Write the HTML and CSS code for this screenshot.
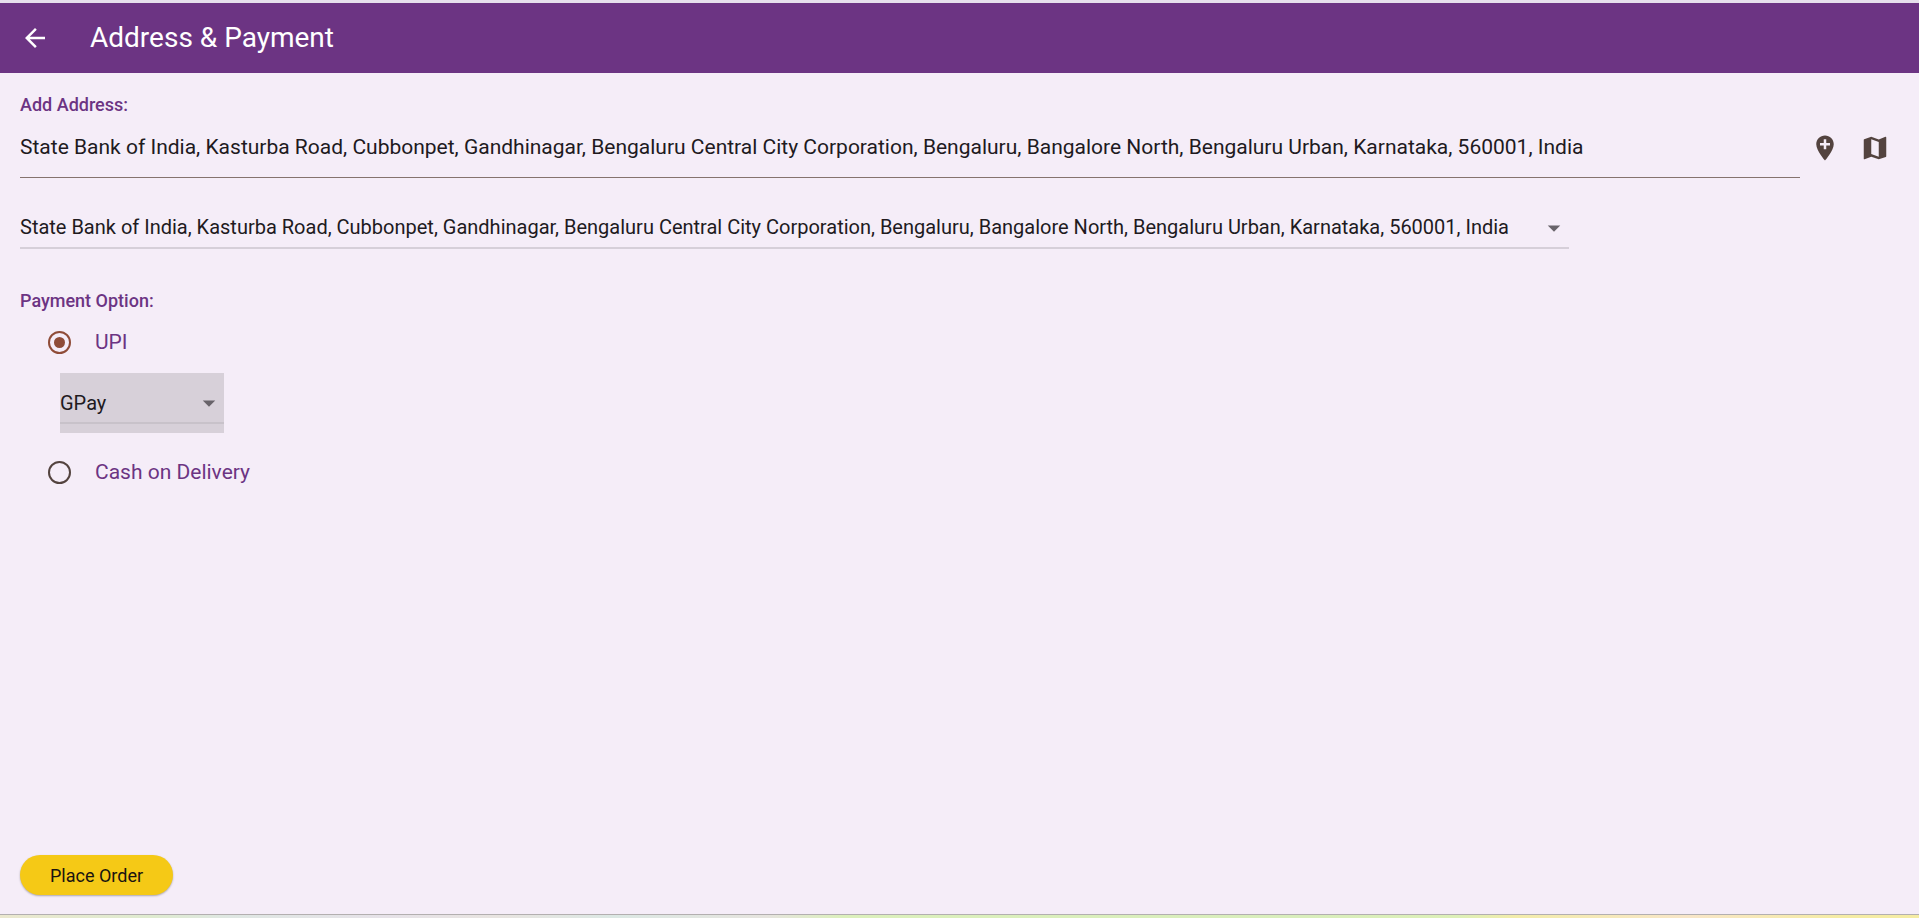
FILE: index.html
```html
<!DOCTYPE html>
<html lang="en">
<head>
<meta charset="utf-8">
<meta name="viewport" content="width=device-width, initial-scale=1">
<title>Address &amp; Payment</title>
<link rel="stylesheet" href="styles.css">
</head>
<body class="page">
<header class="app-bar">
  <button class="icon-button back" type="button" aria-label="Back">
    <svg class="icon" viewBox="0 0 24 24" aria-hidden="true"><path d="M20 11H7.83l5.59-5.59L12 4l-8 8 8 8 1.41-1.41L7.83 13H20v-2z"/></svg>
  </button>
  <h1 class="title">Address &amp; Payment</h1>
</header>
<form class="content">
  <label class="section-label" for="address">Add Address:</label>
  <div class="address-row">
    <input class="address-input" id="address" type="text" value="State Bank of India, Kasturba Road, Cubbonpet, Gandhinagar, Bengaluru Central City Corporation, Bengaluru, Bangalore North, Bengaluru Urban, Karnataka, 560001, India">
    <button class="icon-button" type="button" aria-label="Add location">
      <svg class="icon" viewBox="0 0 24 24" aria-hidden="true"><path d="M12 2C8.14 2 5 5.14 5 9c0 5.25 7 13 7 13s7-7.75 7-13c0-3.86-3.14-7-7-7zm4 8h-3v3h-2v-3H8V8h3V5h2v3h3v2z"/></svg>
    </button>
    <button class="icon-button" type="button" aria-label="Open map">
      <svg class="icon" viewBox="0 0 24 24" aria-hidden="true"><path d="M20.5 3l-.16.03L15 5.1 9 3 3.36 4.9c-.21.07-.36.25-.36.48V20.5c0 .28.22.5.5.5l.16-.03L9 18.9l6 2.1 5.64-1.9c.21-.07.36-.25.36-.48V3.5c0-.28-.22-.5-.5-.5zM15 19l-6-2.11V5l6 2.11V19z"/></svg>
    </button>
  </div>
  <div class="dropdown saved-address">
    <select class="select" aria-label="Saved address">
      <option>State Bank of India, Kasturba Road, Cubbonpet, Gandhinagar, Bengaluru Central City Corporation, Bengaluru, Bangalore North, Bengaluru Urban, Karnataka, 560001, India</option>
    </select>
    <svg class="arrow" viewBox="0 0 24 24" aria-hidden="true"><path d="M7 10l5 5 5-5z"/></svg>
  </div>
  <fieldset class="payment">
    <legend class="section-label">Payment Option:</legend>
    <label class="option"><input class="radio" type="radio" name="payment" checked>UPI</label>
    <div class="dropdown upi-app">
      <select class="select" aria-label="UPI app"><option>GPay</option></select>
      <svg class="arrow" viewBox="0 0 24 24" aria-hidden="true"><path d="M7 10l5 5 5-5z"/></svg>
    </div>
    <label class="option"><input class="radio" type="radio" name="payment">Cash on Delivery</label>
  </fieldset>
  <button class="place-order" type="submit">Place Order</button>
</form>
<footer class="bottom-strip"></footer>
</body>
</html>
```
FILE: styles.css
```css
* {
  box-sizing: border-box;
}

.page {
  display: flex;
  flex-direction: column;
  min-height: 100vh;
  margin: 0;
  border-top: 3px solid #e6dfec;
  background: #f5edf8;
  color: #211a1e;
  font-family: Roboto, "Noto Sans", sans-serif;
  font-size: 20px;
  line-height: 24px;
}

.app-bar {
  display: flex;
  align-items: center;
  gap: 30px;
  height: 70px;
  padding: 0 10px;
  background: #6c3483;
  color: #fff;
}

.title {
  margin: 0;
  font-size: 28px;
  font-weight: 400;
  line-height: 36px;
}

.icon-button {
  display: grid;
  place-items: center;
  flex: none;
  width: 50px;
  height: 50px;
  padding: 0;
  border: 0;
  background: none;
  color: #53433f;
}

.back {
  color: inherit;
}

.icon {
  width: 30px;
  height: 30px;
  fill: currentColor;
}

.content {
  display: flex;
  flex: 1;
  flex-direction: column;
  align-items: flex-start;
  padding: 20px 19px 19px 20px;
}

.section-label {
  padding: 0;
  color: #6c3483;
  font-size: 18px;
  font-weight: 500;
  line-height: 24px;
}

.address-row {
  display: flex;
  align-items: center;
  align-self: stretch;
}

.address-input {
  flex: 1;
  min-width: 0;
  height: 61px;
  padding: 0;
  border: 0;
  border-bottom: 1px solid #85736e;
  background: none;
  color: inherit;
  font-family: inherit;
  font-size: 21px;
}

.dropdown {
  position: relative;
  max-width: 100%;
}

.select {
  display: block;
  width: 100%;
  height: 40px;
  padding: 0 32px 0 0;
  appearance: none;
  border: 0;
  border-bottom: 2px solid #d6cfd9;
  border-radius: 0;
  background: none;
  color: inherit;
  font: inherit;
}

.arrow {
  position: absolute;
  right: 0;
  top: 4px;
  width: 30px;
  height: 30px;
  fill: #68636a;
  pointer-events: none;
}

.saved-address {
  margin-top: 31px;
}

.saved-address .select {
  padding: 0 60px 2px 0;
}

.payment {
  margin: 40px 0 0;
  padding: 0;
  border: 0;
}

.option {
  display: flex;
  align-items: center;
  gap: 24px;
  height: 60px;
  padding: 0 0 2px 28px;
  color: #6c3483;
  font-size: 21px;
}

.radio {
  display: grid;
  place-items: center;
  width: 23px;
  height: 23px;
  margin: 0;
  appearance: none;
  border: 2px solid #53433f;
  border-radius: 50%;
}

.radio:checked {
  border-color: #8f4c38;
}

.radio:checked::before {
  width: 11px;
  height: 11px;
  border-radius: 50%;
  background: #8f4c38;
  content: "";
}

.upi-app {
  width: 164px;
  height: 60px;
  margin: 0 0 10px 40px;
  padding-top: 11px;
  background: #d7d0d9;
}

.upi-app .select {
  border-color: #c8c2ca;
}

.upi-app .arrow {
  top: 15px;
}

.place-order {
  height: 40px;
  margin-top: auto;
  padding: 0 30px;
  border: 0;
  border-radius: 20px;
  background: #f5c916;
  box-shadow: 0 1px 2px #0000004d;
  color: #1a1410;
  font-family: inherit;
  font-size: 18px;
}

.bottom-strip {
  height: 4px;
  border-top: 1px solid #b3afb0;
  background: linear-gradient(90deg, #ebe8cf, #dfebd0 8%, #dfe7e3 12%, #e6e2e8 20%, #e8e4e0 26%, #dce8e4 32%, #e6e4de 40%, #dcf0bc 44%, #d9eebc 68%, #ddf0b8 76%, #f3ecaa 79%, #f8e6c8 88%, #f5eca4 96%);
}
```
